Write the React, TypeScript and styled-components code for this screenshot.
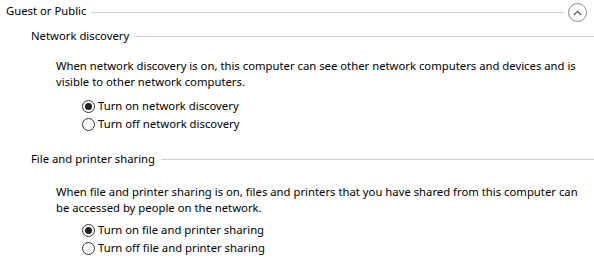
import React from "react";
import styled, { createGlobalStyle } from "styled-components";

const Global = createGlobalStyle`
  html, body { margin: 0; padding: 0; background: #fff; }
  body {
    font-family: "Noto Sans", "Open Sans", sans-serif;
    font-size: 11.3px;
    color: #000;
  }
`;

const Page = styled.div`
  width: 594px;
  height: 266px;
  overflow: hidden;
  padding-left: 6px;
  box-sizing: border-box;
`;

const GroupHeader = styled.div`
  display: flex;
  align-items: center;
  height: 24px;
`;

const GroupTitle = styled.span`
  line-height: 16px;
  margin-top: -3px;
`;

const Rule = styled.div<{ $gapLeft: number; $gapRight?: number }>`
  flex: 1;
  height: 1px;
  background: #d0d0d0;
  margin-left: ${(p) => p.$gapLeft}px;
  margin-right: ${(p) => p.$gapRight ?? 0}px;
`;

const CollapseButton = styled.div`
  width: 17px;
  height: 17px;
  border: 1px solid #8a8a8a;
  border-radius: 50%;
  display: flex;
  align-items: center;
  justify-content: center;
  margin-right: 7px;
  margin-top: 1px;
`;

const Section = styled.div<{ $top: number }>`
  padding-left: 25px;
  margin-top: ${(p) => p.$top}px;
`;

const SectionHeader = styled.div`
  display: flex;
  align-items: center;
  height: 24px;
`;

const SectionTitle = styled.span`
  line-height: 16px;
`;

const Description = styled.p<{ $top: number }>`
  margin: ${(p) => p.$top}px 0 0 25px;
  line-height: 16px;
`;

const Line = styled.span`
  display: block;
  white-space: nowrap;
`;

const RadioGroup = styled.div<{ $top: number }>`
  margin: ${(p) => p.$top}px 0 0 51px;
  display: flex;
  flex-direction: column;
`;

const RadioRow = styled.label`
  display: flex;
  align-items: center;
  height: 18px;
`;

const RadioCircle = styled.span<{ $checked: boolean }>`
  width: 11px;
  height: 11px;
  border: 1px solid #333;
  border-radius: 50%;
  display: flex;
  align-items: center;
  justify-content: center;
  margin-right: 3px;
  &::after {
    content: "";
    display: ${(p) => (p.$checked ? "block" : "none")};
    width: 7px;
    height: 7px;
    border-radius: 50%;
    background: #222;
  }
`;

const RadioLabel = styled.span`
  line-height: 16px;
`;

function Radio({ checked, children }: { checked: boolean; children: React.ReactNode }) {
  return (
    <RadioRow>
      <RadioCircle $checked={checked} />
      <RadioLabel>{children}</RadioLabel>
    </RadioRow>
  );
}

export default function App() {
  return (
    <>
      <Global />
      <Page>
        <GroupHeader>
          <GroupTitle>Guest or Public</GroupTitle>
          <Rule $gapLeft={5} $gapRight={4} />
          <CollapseButton>
            <svg width="9" height="6" viewBox="0 0 9 6">
              <path d="M0.8 5 L4.5 1.3 L8.2 5" fill="none" stroke="#555" strokeWidth="1.1" />
            </svg>
          </CollapseButton>
        </GroupHeader>

        <Section $top={0}>
          <SectionHeader>
            <SectionTitle>Network discovery</SectionTitle>
            <Rule $gapLeft={6} />
          </SectionHeader>
          <Description $top={10}>
            <Line>When network discovery is on, this computer can see other network computers and devices and is</Line>
            <Line>visible to other network computers.</Line>
          </Description>
          <RadioGroup $top={7}>
            <Radio checked>Turn on network discovery</Radio>
            <Radio checked={false}>Turn off network discovery</Radio>
          </RadioGroup>
        </Section>

        <Section $top={14}>
          <SectionHeader>
            <SectionTitle>File and printer sharing</SectionTitle>
            <Rule $gapLeft={6} />
          </SectionHeader>
          <Description $top={13}>
            <Line>When file and printer sharing is on, files and printers that you have shared from this computer can</Line>
            <Line>be accessed by people on the network.</Line>
          </Description>
          <RadioGroup $top={5}>
            <Radio checked>Turn on file and printer sharing</Radio>
            <Radio checked={false}>Turn off file and printer sharing</Radio>
          </RadioGroup>
        </Section>
      </Page>
    </>
  );
}
